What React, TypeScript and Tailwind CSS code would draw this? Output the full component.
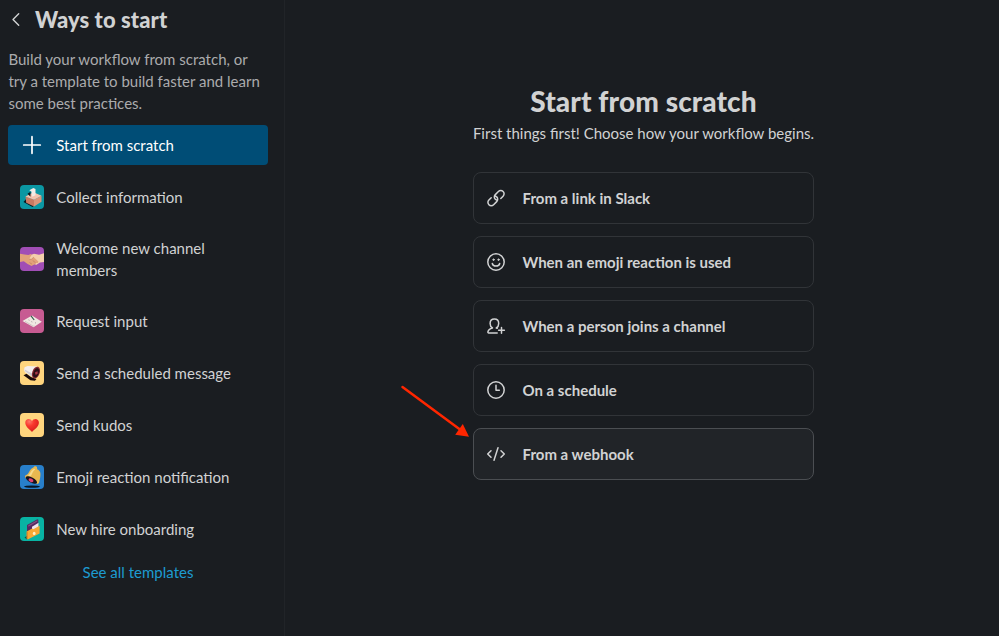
import type { ReactNode } from "react";

const tile = "h-6 w-6 shrink-0";

function BallotIcon() {
  return (
    <svg viewBox="0 0 24 24" className={tile}>
      <rect width="24" height="24" rx="4" fill="#0b97a3" />
      <path d="M3.5 17l3-3.5 8 7-2 1.5z" fill="#071a22" />
      <path d="M5.5 11.5l8.5 3.3v6.6l-7.8-3.6z" fill="#c97a62" />
      <path d="M14 14.8l7.5-4v6l-7.5 4.6z" fill="#dc957a" />
      <path d="M5.5 11.5l8-4.3 8 3.6-7.5 4z" fill="#f4c3ae" />
      <path d="M7.5 8.8l3-2v5z" fill="#10181c" />
      <path d="M9.3 5.2l4-2.3 2.2 1.1v6.2l-3.2 1.6-1-5.4z" fill="#f3ebe6" />
    </svg>
  );
}

function HandshakeIcon() {
  return (
    <svg viewBox="0 0 24 24" className={tile}>
      <rect width="24" height="24" rx="4" fill="#a14eb5" />
      <path d="M24 6.2l-5 1.6-5-1-4 1.4-2 4 3 1 5 4.8 4-2.4 4-.5z" fill="#f3d0ab" />
      <path d="M0 6.7l4.5.8 4 .4 2.2-.8 1 .7-2.5 4 2 .6 2.6-2.2 4.6 4.2-.6 1.5-1.6.2-1.4 1.5-1.6.4-1.6.9-4-1.8-3.8-2.8L0 15z" fill="#e2a27a" />
      <path d="M9.2 12l2 .4 2.6-2.2M12 17.2l-2.5-1.6M15.5 15.7l-2.8-2.2" fill="none" stroke="#b97859" strokeWidth=".6" />
    </svg>
  );
}

function PaperIcon() {
  return (
    <svg viewBox="0 0 24 24" className={tile}>
      <rect width="24" height="24" rx="4" fill="#c75b92" />
      <path d="M2.5 12L12 6.6l9.8 6.2-8.2 5.5z" fill="#f0e8e2" />
      <path d="M5 12.2l8.2 5 1.1-.5" fill="none" stroke="#bcb0b4" strokeWidth=".6" />
      <path d="M11 6.8l3.2 4.2" stroke="#285746" strokeWidth="1.1" />
      <path d="M8.5 10.8l1 .5M11.3 12.6l1 .4M15 14l1-.2" stroke="#8d8388" strokeWidth=".7" />
    </svg>
  );
}

function MegaphoneIcon() {
  return (
    <svg viewBox="0 0 24 24" className={tile}>
      <rect width="24" height="24" rx="4" fill="#ffd57e" />
      <path d="M3.5 14.3l3-1.5 4.4 3.2 5.6 2-1.6 1.8-4.5-.5z" fill="#19090b" />
      <path d="M4.6 6.2l3-1.2L17 5.6l-3.5 11L5 11.2q-1.5-2.6-.4-5z" fill="#f4eeee" />
      <path d="M5 10.2l8.5 6.6 1-3-9.8-5.2z" fill="#d2cdd2" />
      <ellipse cx="16" cy="11.6" rx="3.7" ry="6.2" transform="rotate(20 16 11.6)" fill="#822832" />
      <ellipse cx="16.1" cy="11.8" rx="2.6" ry="4.8" transform="rotate(20 16.1 11.8)" fill="#2b1017" />
      <path d="M14.8 11.5l2.7-1.2.3 2.3-2 1.5z" fill="#a93846" />
    </svg>
  );
}

function HeartIcon() {
  return (
    <svg viewBox="0 0 24 24" className={tile}>
      <defs>
        <radialGradient id="heart" cx=".3" cy=".2" r=".85">
          <stop offset="0" stopColor="#ff7868" />
          <stop offset=".4" stopColor="#f9372d" />
          <stop offset="1" stopColor="#d51c1d" />
        </radialGradient>
      </defs>
      <rect width="24" height="24" rx="4" fill="#ffd57e" />
      <path d="M12 18.9C9 16.4 5.3 13.4 5.3 9.6c0-4.3 5.2-4.7 6.7-1.3 1.5-3.4 6.9-3 6.9 1.3 0 3.8-3.9 6.8-6.9 9.3z" fill="url(#heart)" />
    </svg>
  );
}

function BellIcon() {
  return (
    <svg viewBox="0 0 24 24" className={tile}>
      <rect width="24" height="24" rx="4" fill="#287fca" />
      <ellipse cx="12" cy="21.6" rx="8" ry="1.2" fill="#061626" />
      <path d="M13.3 2.6l1.6-1.5 2 .7.3 2.4c4 1.8 4 5 1.8 13.8l-1.5 1L5 12.6l.3-2c4.4-1.2 3.8-6.6 8-8z" fill="#e9b950" />
      <path d="M14 3.8c-3.5 1.5-3.2 4.8-6 6.8l2.4 1c2-2 2.1-5.4 4.8-7.3z" fill="#f8db8b" />
      <ellipse cx="11.4" cy="15" rx="6.3" ry="2.6" transform="rotate(28 11.4 15)" fill="#16141b" />
      <ellipse cx="11" cy="15.3" rx="2.6" ry="1.7" transform="rotate(28 11 15.3)" fill="#dc4273" />
    </svg>
  );
}

function FolderIcon() {
  return (
    <svg viewBox="0 0 24 24" className={tile}>
      <rect width="24" height="24" rx="4" fill="#08b3a3" />
      <path d="M4.5 20.5l2.6-1.8v3.8z" fill="#07554c" />
      <path d="M7 8L17.3 2.2l1 .6v11L7 20z" fill="#552a61" />
      <path d="M8.3 8.2l9-5v1.4L8.3 9.8z" fill="#855083" />
      <path d="M12 9.8l6.5-4v10l-6.5 3z" fill="#eee6ef" />
      <path d="M6.7 14.6l5.4-3 1.2.6 6.3-3.4v7.8L7.6 22.6l-.9-1z" fill="#f7a833" />
      <path d="M6.7 14.6l.9.7v7.3l-.9-1z" fill="#ce7726" />
      <ellipse cx="14.2" cy="16.4" rx="1.4" ry="1.7" fill="#fff0c5" />
    </svg>
  );
}

function Line({ children }: { children: ReactNode }) {
  return (
    <svg viewBox="0 0 20 20" className="h-5 w-5 shrink-0" fill="none" stroke="currentColor" strokeWidth="1.5" strokeLinecap="round" strokeLinejoin="round">
      {children}
    </svg>
  );
}

const templates: { label: string; icon: ReactNode }[] = [
  { label: "Collect information", icon: <BallotIcon /> },
  { label: "Welcome new channel members", icon: <HandshakeIcon /> },
  { label: "Request input", icon: <PaperIcon /> },
  { label: "Send a scheduled message", icon: <MegaphoneIcon /> },
  { label: "Send kudos", icon: <HeartIcon /> },
  { label: "Emoji reaction notification", icon: <BellIcon /> },
  { label: "New hire onboarding", icon: <FolderIcon /> },
];

const triggers: { label: string; icon: ReactNode; active?: boolean }[] = [
  {
    label: "From a link in Slack",
    icon: (
      <Line>
        <path d="M11.4 12.3a3.3 3.3 0 0 1-2.1-1 3.3 3.3 0 0 1 0-4.7l3.1-3.1a3.3 3.3 0 0 1 4.7 0 3.3 3.3 0 0 1 0 4.7l-2.3 2.3M8.6 7.9a3.3 3.3 0 0 1 2.1 1 3.3 3.3 0 0 1 0 4.7l-3.1 3.1a3.3 3.3 0 0 1-4.7 0 3.3 3.3 0 0 1 0-4.7l2.3-2.3" />
      </Line>
    ),
  },
  {
    label: "When an emoji reaction is used",
    icon: (
      <Line>
        <circle cx="10" cy="10" r="8.2" />
        <path d="M6.3 11.5c.7 3.4 6.7 3.4 7.4 0" />
        <ellipse cx="7.5" cy="7.7" rx=".7" ry=".8" fill="currentColor" strokeWidth=".9" />
        <ellipse cx="12.5" cy="7.7" rx=".7" ry=".8" fill="currentColor" strokeWidth=".9" />
      </Line>
    ),
  },
  {
    label: "When a person joins a channel",
    icon: (
      <Line>
        <path d="M11.2 17H2.7c-.6 0-.9-.5-.8-1.1.4-2.2 2-3.3 4.6-3.9-1.6-1-2.4-2.5-2.4-4.6 0-2.6 1.8-4.4 4.3-4.4s4.3 1.8 4.3 4.4c0 2.1-.8 3.6-2.4 4.6l.9.3M15.5 11.4v5.8M12.6 14.3h5.8" />
      </Line>
    ),
  },
  {
    label: "On a schedule",
    icon: (
      <Line>
        <circle cx="10" cy="10" r="8.2" />
        <path d="M10 5.3v5h3.3" />
      </Line>
    ),
  },
  {
    label: "From a webhook",
    active: true,
    icon: (
      <Line>
        <path d="M5 6.7L1.7 10 5 13.3M15 6.7l3.3 3.3-3.3 3.3M12 3.7L8 16.3" />
      </Line>
    ),
  },
];

export default function App() {
  return (
    <div className="relative flex h-[636px] w-[999px] overflow-hidden bg-[#1a1d21] font-['Lato',sans-serif] text-[15px] leading-[22px] text-[#d1d2d3]">
      <aside className="flex w-[285px] shrink-0 flex-col border-r border-[#212428] pl-2 pr-[16px]">
        <header className="flex h-10 items-center">
          <button aria-label="Back" className="mr-[11px] flex h-6 w-4 items-center justify-center">
            <svg width="16" height="20" viewBox="0 0 16 20" fill="none" stroke="currentColor" strokeWidth="1.4" strokeLinecap="round" strokeLinejoin="round">
              <path d="M10.7 3.8L5 9.5l5.7 5.8" />
            </svg>
          </button>
          <h1 className="text-[22px] font-black leading-[30px] tracking-[0.08px]">Ways to start</h1>
        </header>
        <p className="mt-2 w-[256px] pl-[0.4px] text-[#ababad]">
          Build your workflow from scratch, or try a template to build faster and learn some best practices.
        </p>
        <nav className="mt-[11.4px] flex flex-col gap-3">
          <button className="flex h-10 items-center gap-[12.3px] rounded bg-[#004d76] px-3 text-left text-white">
            <svg viewBox="0 0 24 24" className="h-6 w-6 shrink-0" fill="none" stroke="currentColor" strokeWidth="1.7" strokeLinecap="round">
              <path d="M12 3.7v16.6M3.7 12h16.6" />
            </svg>
            Start from scratch
          </button>
          {templates.map((t) => (
            <button key={t.label} className="flex min-h-10 items-center gap-[12.3px] px-3 py-2 text-left">
              {t.icon}
              <span className="w-[190px]">{t.label}</span>
            </button>
          ))}
        </nav>
        <a className="mt-3 text-center text-[#1d9bd1]">See all templates</a>
      </aside>
      <main className="flex flex-1 flex-col items-center pl-[3px] pt-[84px]">
        <h2 className="text-[28px] font-black leading-[34px] tracking-[0.1px]">Start from scratch</h2>
        <p className="mt-1">First things first! Choose how your workflow begins.</p>
        <div className="mt-7 flex w-[341px] flex-col gap-3">
          {triggers.map((t) => (
            <button
              key={t.label}
              className={`flex h-[52px] items-center gap-[16.5px] rounded-lg border px-3 text-left font-bold ${
                t.active ? "border-[#4b4e52] bg-[#212428]" : "border-[#313438]"
              }`}
            >
              {t.icon}
              <span>{t.label}</span>
            </button>
          ))}
        </div>
      </main>
      <svg className="absolute left-[398px] top-[382px]" width="76" height="60" viewBox="0 0 76 60">
        <path d="M4.5 5L62 47.5" stroke="#ff2600" strokeWidth="2.5" strokeLinecap="round" />
        <path d="M71 54.7L57.2 52.8 64.8 42z" fill="#ff2600" />
      </svg>
    </div>
  );
}
